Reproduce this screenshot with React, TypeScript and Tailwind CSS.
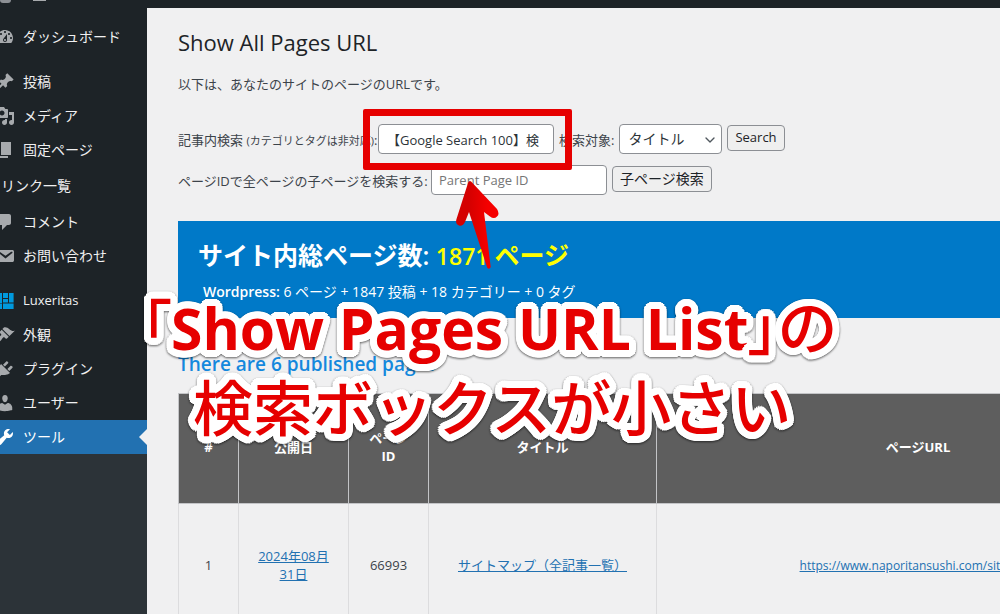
import React from "react";
import { ChevronDown } from "lucide-react";
import clsx from "clsx";

interface MenuEntry {
  label: string;
  icon?: string;
  tile?: boolean;
  active?: boolean;
}

const menuGroups: MenuEntry[][] = [
  [
    {
      label: "ダッシュボード",
      icon: "M3.76 16h12.48c1.1-1.37 1.76-3.11 1.76-5 0-4.42-3.58-8-8-8s-8 3.58-8 8c0 1.89.66 3.63 1.76 5zM10 4c.55 0 1 .45 1 1s-.45 1-1 1-1-.45-1-1 .45-1 1-1zM6 6c.55 0 1 .45 1 1s-.45 1-1 1-1-.45-1-1 .45-1 1-1zm8 0c.55 0 1 .45 1 1s-.45 1-1 1-1-.45-1-1 .45-1 1-1zm-5.37 5.55L12 7v6c0 1.1-.9 2-2 2s-2-.9-2-2c0-.57.24-1.08.63-1.45zM4 10c.55 0 1 .45 1 1s-.45 1-1 1-1-.45-1-1 .45-1 1-1zm12 0c.55 0 1 .45 1 1s-.45 1-1 1-1-.45-1-1 .45-1 1-1zm-5 3c0-.55-.45-1-1-1s-1 .45-1 1 .45 1 1 1 1-.45 1-1z",
    },
  ],
  [
    {
      label: "投稿",
      icon: "M10.44 3.02l1.82-1.82 6.36 6.35-1.83 1.82c-1.05-.68-2.48-.57-3.41.36l-.75.75c-.92.93-1.04 2.35-.35 3.41l-1.83 1.82-2.41-2.41-2.8 2.79c-.42.42-3.38 2.71-3.8 2.29s1.86-3.39 2.28-3.81l2.79-2.79L4.1 9.36l1.83-1.82c1.05.69 2.48.57 3.4-.36l.75-.75c.93-.92 1.05-2.35.36-3.41z",
    },
    {
      label: "メディア",
      icon: "M13 11V4c0-.55-.45-1-1-1h-1.67L9 1H5L3.67 3H2c-.55 0-1 .45-1 1v7c0 .55.45 1 1 1h10c.55 0 1-.45 1-1zM7 4.5c1.38 0 2.5 1.12 2.5 2.5S8.38 9.5 7 9.5 4.5 8.38 4.5 7 5.62 4.5 7 4.5zM14 6h5v10.5c0 1.38-1.12 2.5-2.5 2.5S14 17.88 14 16.5s1.12-2.5 2.5-2.5c.17 0 .34.02.5.05V9h-3V6zm-4 8.05V13h2v3.5c0 1.38-1.12 2.5-2.5 2.5S7 17.88 7 16.5 8.12 14 9.5 14c.17 0 .34.02.5.05z",
    },
    { label: "固定ページ", icon: "M6 15V2h10v13H6zm-1 1h8v2H3V5h2v11z" },
    { label: "リンク一覧" },
    {
      label: "コメント",
      icon: "M5 2h9c1.1 0 2 .9 2 2v7c0 1.1-.9 2-2 2h-2l-5 5v-5H5c-1.1 0-2-.9-2-2V4c0-1.1.9-2 2-2z",
    },
    {
      label: "お問い合わせ",
      icon: "M3.87 4h13.25C18.37 4 19 4.59 19 5.79v8.42c0 1.19-.63 1.79-1.88 1.79H3.87c-1.25 0-1.88-.6-1.88-1.79V5.79c0-1.2.63-1.79 1.88-1.79zm6.62 8.6l6.74-5.53c.24-.2.43-.66.13-1.07-.29-.41-.82-.42-1.17-.17l-5.7 3.86L4.8 5.83c-.35-.25-.88-.24-1.17.17-.3.41-.11.87.13 1.07z",
    },
  ],
  [
    {
      label: "Luxeritas",
      tile: true,
      icon: "M2 2h5v10H2zM8 2h5v5H8zM14 2h4.600v9.500H14zM8 8h5v3.500H8zM2 12.500h5V18H2zM8 12.500h10.600V18H8z",
    },
    {
      label: "外観",
      icon: "M14.48 11.06L7.41 3.99l1.5-1.5c.5-.56 2.3-.47 3.51.32 1.21.8 1.43 1.28 2.91 2.1 1.18.64 2.45 1.26 4.45.85zm-.71.71L6.7 4.7 4.93 6.47c-.39.39-.39 1.02 0 1.41l1.06 1.06c.39.39.39 1.03 0 1.42-.6.6-1.43 1.11-2.21 1.69-.35.26-.7.53-1.01.84C1.43 14.23.4 16.08 1.4 17.07c.99 1 2.84-.03 4.18-1.36.31-.31.58-.66.85-1.02.57-.78 1.08-1.61 1.69-2.21.39-.39 1.02-.39 1.41 0l1.06 1.06c.39.39 1.02.39 1.41 0z",
    },
    {
      label: "プラグイン",
      icon: "M13.11 4.36L9.87 7.6 8 5.73l3.24-3.24c.35-.34 1.05-.2 1.56.32.52.51.66 1.21.31 1.55zm-8 1.77l.91-1.12 9.01 9.01-1.19.84c-.71.71-2.63 1.16-3.82 1.16H6.14L4.9 17.26c-.59.59-1.54.59-2.12 0-.59-.58-.59-1.53 0-2.12l1.24-1.24v-3.88c0-1.13.4-3.19 1.09-3.89zm7.26 3.97l3.24-3.24c.34-.35 1.04-.21 1.55.31.52.51.66 1.21.31 1.55l-3.24 3.25z",
    },
    {
      label: "ユーザー",
      icon: "M10 9.25c-2.27 0-2.73-3.44-2.73-3.44C7 4.02 7.82 2 9.97 2c2.16 0 2.98 2.02 2.71 3.81 0 0-.41 3.44-2.68 3.44zm0 2.57L12.72 10c2.39 0 4.52 2.33 4.52 4.53v2.49s-3.65 1.13-7.24 1.13c-3.65 0-7.24-1.13-7.24-1.13v-2.49c0-2.25 1.94-4.48 4.47-4.48z",
    },
    {
      label: "ツール",
      active: true,
      icon: "M16.68 9.77c-1.34 1.34-3.3 1.67-4.95.99l-5.41 6.52c-.99.99-2.59.99-3.58 0s-.99-2.59 0-3.57l6.52-5.42c-.68-1.65-.35-3.61.99-4.95 1.28-1.28 3.12-1.62 4.72-1.06l-2.89 2.89 2.82 2.82 2.86-2.87c.53 1.58.18 3.39-1.08 4.65z",
    },
  ],
];

function MenuItem({ label, icon, tile, active }: MenuEntry) {
  return (
    <li>
      <a
        href="#"
        className={clsx(
          "relative flex items-center gap-2 whitespace-nowrap text-[#f0f0f1]",
          icon ? "h-[34px]" : "h-[38px] pl-px",
          tile ? "text-[13px]" : "text-sm",
          active && "bg-[#2271b1] text-white"
        )}
      >
        {icon && (
          <svg
            viewBox="0 0 20 20"
            className={clsx(
              "-ml-[5px] size-5 shrink-0",
              tile ? "fill-[#0099dd]" : active ? "fill-white" : "fill-[#a7aaad]"
            )}
          >
            <path d={icon} />
          </svg>
        )}
        {label}
        {active && (
          <span className="absolute right-0 top-1/2 -translate-y-1/2 border-y-8 border-r-8 border-y-transparent border-r-[#f0f0f1]" />
        )}
      </a>
    </li>
  );
}

function AdminBar() {
  return (
    <header className="flex h-2 shrink-0 items-start bg-[#1d2327]">
      <span className="h-[3px] w-[11px] rounded-b-full bg-[#8c8f94]" />
      <span className="ml-[22px] h-px w-[13px] bg-[#a7aaad]" />
    </header>
  );
}

function Sidebar() {
  return (
    <nav className="w-[147px] shrink-0 bg-[#1d2327]">
      <div className="flex flex-col gap-[11px] pt-3">
        {menuGroups.map((group, i) => (
          <ul key={i}>
            {group.map((entry) => (
              <MenuItem key={entry.label} {...entry} />
            ))}
          </ul>
        ))}
      </div>
      <div className="h-screen bg-[#2c3338]" />
    </nav>
  );
}

function SearchForms() {
  const label = "pt-[3px]";
  const field = "h-[30px] rounded-sm border border-[#8c8f94] bg-white text-[#2c3338]";
  const button =
    "mt-px h-[26px] self-start rounded-sm border border-[#8c8f94] bg-[#efefef] px-[7px] text-[#1d2327]";

  return (
    <div className="mt-[30px] flex flex-col gap-[11px] whitespace-nowrap">
      <form className="flex items-center gap-[5px]">
        <label htmlFor="keyword" className={clsx(label, "w-[195px]")}>
          記事内検索 <small className="text-[11px]">(カテゴリとタグは非対応)</small>:
        </label>
        <div className="relative">
          <input
            id="keyword"
            className={clsx(field, "w-44 px-2")}
            defaultValue="【Google Search 100】検"
          />
          <Highlight />
        </div>
        <label htmlFor="target" className={label}>
          検索対象:
        </label>
        <div className="relative">
          <select id="target" className={clsx(field, "w-[103px] appearance-none px-2 text-sm")}>
            <option>タイトル</option>
          </select>
          <ChevronDown size={16} className="pointer-events-none absolute right-1 top-2 text-[#50575e]" />
        </div>
        <button type="button" className={button}>
          Search
        </button>
      </form>
      <form className="flex items-center gap-[5px]">
        <label htmlFor="parent" className={clsx(label, "w-[248px]")}>
          ページIDで全ページの子ページを検索する:
        </label>
        <input
          id="parent"
          className={clsx(field, "w-44 px-[7px] placeholder:text-[#757575]")}
          placeholder="Parent Page ID"
        />
        <button type="button" className={clsx(button, "text-sm")}>
          子ページ検索
        </button>
      </form>
    </div>
  );
}

function Highlight() {
  return (
    <>
      <span className="pointer-events-none absolute -left-[15px] -right-[18px] -top-[15px] h-[61px] rounded-xs border-[7px] border-[#e60000]" />
      <svg
        viewBox="0 0 50 94"
        className="pointer-events-none absolute left-[76px] top-[53px] z-10 h-[94px] w-[50px]"
      >
        <defs>
          <linearGradient id="arrow" x1="0" y1="0" x2="1" y2="0">
            <stop offset="0.3" stopColor="#d40000" />
            <stop offset="0.75" stopColor="#f50000" />
          </linearGradient>
        </defs>
        <path
          d="M14 6Q15.500 2 18.500 6L43 32Q46 37 43 39.500Q40 42.500 36 39.500L30 35L36.700 90Q35.500 93 33.300 91L15 35L11 45Q9 49.500 5 48.500Q1 47 2.500 42Z"
          fill="url(#arrow)"
        />
      </svg>
    </>
  );
}

function Summary() {
  return (
    <section className="mt-[26px] h-[97px] w-[1002px] bg-[#0079c8] px-5 pt-4 text-white">
      <h2 className="text-[25px] font-semibold leading-9">
        サイト内総ページ数:{" "}
        <span className="text-[#ffff00]">
          <span className="text-[23px]">1871 </span>ページ
        </span>
      </h2>
      <p className="mt-2 pl-[5px] text-sm">
        <b className="font-semibold">Wordpress:</b> 6 ページ + 1847 投稿 + 18 カテゴリー + 0 タグ
      </p>
    </section>
  );
}

function PageTable() {
  const th = "border border-[#c3c4c7] px-2 pb-2 pt-1";
  const td = "border border-[#dcdcde] px-2 pb-2 pt-1";
  const link = "text-[#2271b1] underline";

  return (
    <table className="mt-[13px] w-[1002px] table-fixed border-collapse text-center leading-[18px]">
      <colgroup>
        <col className="w-[60px]" />
        <col className="w-[110px]" />
        <col className="w-20" />
        <col className="w-[228px]" />
        <col />
      </colgroup>
      <thead>
        <tr className="h-[110px] bg-[#5e5e5e] text-white">
          <th className={th}>#</th>
          <th className={th}>公開日</th>
          <th className={th}>
            ページ
            <br />
            ID
          </th>
          <th className={th}>タイトル</th>
          <th className={th}>ページURL</th>
        </tr>
      </thead>
      <tbody>
        <tr className="h-[126px]">
          <td className={td}>1</td>
          <td className={td}>
            <a href="#" className={link}>
              2024年08月
              <br />
              31日
            </a>
          </td>
          <td className={td}>66993</td>
          <td className={td}>
            <a href="#" className={link}>
              サイトマップ（全記事一覧）
            </a>
          </td>
          <td className={td}>
            <a href="#" className={clsx(link, "text-xs")}>
              https://www.naporitansushi.com/sitemap/
            </a>
          </td>
        </tr>
      </tbody>
    </table>
  );
}

// text-stroke draws mitred corners, rings of shadows keep the outline round
function outline(radii: number[], steps: number) {
  return radii
    .flatMap((r) =>
      Array.from({ length: steps }, (_, i) => {
        const a = (i / steps) * Math.PI * 2;
        return `${(r * Math.cos(a)).toFixed(1)}px ${(r * Math.sin(a)).toFixed(1)}px 0 white`;
      })
    )
    .join(", ");
}

function Caption() {
  return (
    <div
      className="pointer-events-none absolute left-[141px] top-[287px] z-20 whitespace-nowrap text-[60px] font-medium leading-[80px] text-[#e60000] drop-shadow-[0_1px_1px_rgb(0_0_0/0.6)]"
      style={{ textShadow: outline([3, 7], 24) }}
    >
      <p className="[font-feature-settings:'palt']">
        「<b className="text-[57px]">Show Pages URL List</b>」の
      </p>
      <p className="pl-[52px]">検索ボックスが小さい</p>
    </div>
  );
}

function App() {
  return (
    <div
      lang="ja"
      className="relative flex h-screen flex-col overflow-hidden bg-[#f0f0f1] font-['Open_Sans','Noto_Sans_CJK_JP',sans-serif] text-[13px] text-[#3c434a]"
    >
      <AdminBar />
      <div className="flex min-h-0 flex-1">
        <Sidebar />
        <main className="min-w-0 flex-1 overflow-hidden pl-[31px]">
          <h1 className="pt-[18px] text-[22px] leading-8 text-[#1d2327]">Show All Pages URL</h1>
          <p className="mt-4 leading-5">以下は、あなたのサイトのページのURLです。</p>
          <SearchForms />
          <Summary />
          <h3 className="mt-8 text-[19px] font-semibold leading-7 text-[#1488dd]">
            There are 6 published pages
          </h3>
          <div className="pt-[2px]">
            <PageTable />
          </div>
        </main>
      </div>
      <Caption />
    </div>
  );
}

export default App;
